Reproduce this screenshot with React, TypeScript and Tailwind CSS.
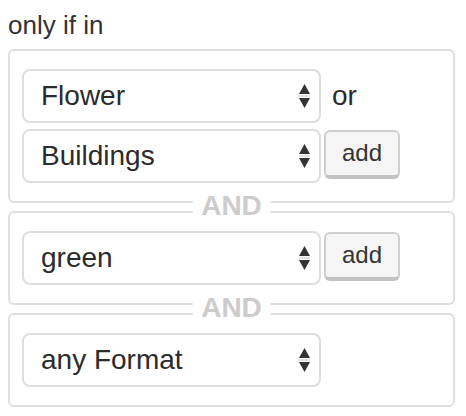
import React from "react";

function Arrows() {
  return (
    <svg width="13" height="25" viewBox="0 0 13 25" className="shrink-0">
      <path d="M6.5 0 L12 10 L1 10 Z" fill="#333" />
      <rect x="1" y="11.5" width="11" height="1" fill="#c8c8c8" />
      <path d="M1 14 L12 14 L6.5 24 Z" fill="#333" />
    </svg>
  );
}

function Select({ label }: { label: string }) {
  return (
    <div className="h-[54px] w-[299px] shrink-0 rounded-[8px] border-2 border-[#dedede] bg-white flex items-center justify-between pl-[17px] pr-[8px]">
      <span className="text-[28px] leading-normal text-[#2b2b2b]">{label}</span>
      <Arrows />
    </div>
  );
}

function AddButton() {
  return (
    <div className="mt-[1px] ml-[3px] h-[49px] w-[76px] rounded-[6px] border-2 border-b-[4px] border-[#cfcfcf] border-b-[#c2c2c2] bg-[#f5f5f5] flex items-center justify-center">
      <span className="text-[24px] leading-none text-[#333] -mt-[1px]">add</span>
    </div>
  );
}

function Box({ children }: { children: React.ReactNode }) {
  return (
    <div className="rounded-[6px] border-2 border-[#dfdfdf] pl-[12px] pr-[12px] pt-[18px] pb-[18px] flex flex-col gap-[6px]">
      {children}
    </div>
  );
}

function AndSep() {
  return (
    <div className="relative z-10 h-[8px]">
      <span className="absolute left-1/2 top-1/2 -translate-x-1/2 -translate-y-1/2 -mt-[1px] bg-white px-[9px] text-[28px] font-bold leading-[26px] text-[#cccccc]">
        AND
      </span>
    </div>
  );
}

export default function App() {
  return (
    <div className="w-[466px] h-[416px] bg-white font-['Liberation_Sans',Arial,sans-serif] text-[#333]">
      <div className="pt-[10px] pl-[8px] text-[26px] leading-[30px] text-[#333]">only if in</div>
      <div className="ml-[8px] mt-[9px] w-[447px] flex flex-col">
        <Box>
          <div className="flex items-center">
            <Select label="Flower" />
            <span className="ml-[11px] text-[28px] leading-normal text-[#2b2b2b]">or</span>
          </div>
          <div className="flex items-start">
            <Select label="Buildings" />
            <AddButton />
          </div>
        </Box>
        <AndSep />
        <Box>
          <div className="flex items-start">
            <Select label="green" />
            <AddButton />
          </div>
        </Box>
        <AndSep />
        <Box>
          <div className="flex items-start">
            <Select label="any Format" />
          </div>
        </Box>
      </div>
    </div>
  );
}
